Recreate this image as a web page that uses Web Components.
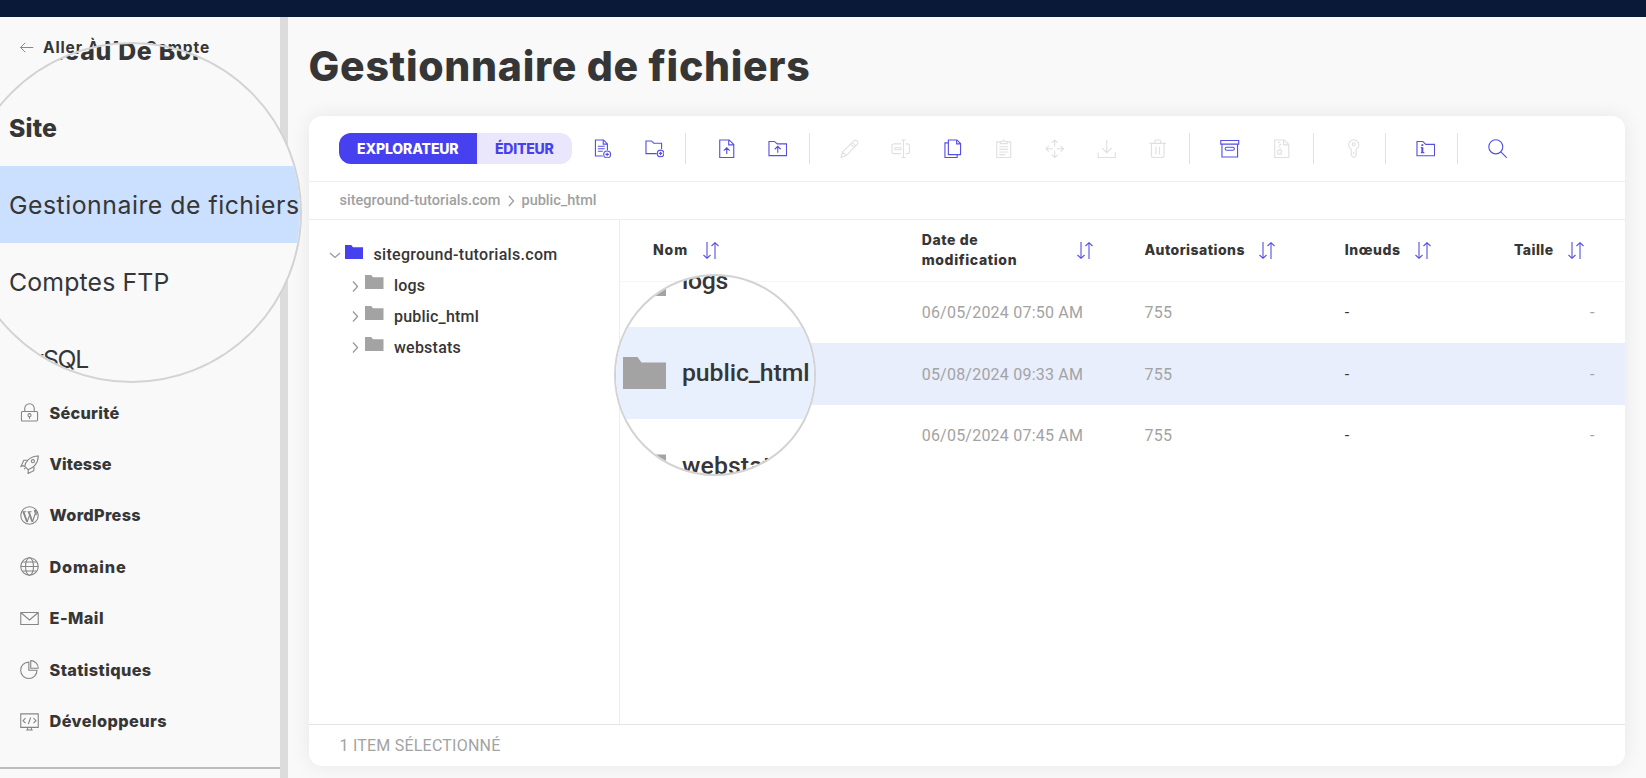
<!DOCTYPE html>
<html lang="fr">
<head>
<meta charset="utf-8">
<title>Gestionnaire de fichiers</title>
<style>
  html, body {
    margin: 0;
    height: 100%;
    overflow: hidden;
    background: #f9f9f9;
    color: #363636;
    font-family: Roboto, sans-serif;
  }
</style>
</head>
<body>
<file-manager-app></file-manager-app>

<script>
const HEAD_FONT = "Inter, 'Open Sans', sans-serif";

// All icons share a 20x20 box
const ICONS = {
  back: '<path d="M18 10H3M8.500 4.500 3 10l5.500 5.500"/>',
  lock: '<rect x="1.500" y="9" width="17" height="10" rx="1"/><path d="M5 9V5.800a5 5 0 0 1 10 0V9"/><circle cx="10" cy="12.800" r="1.600"/><path d="M10 14.400v2.400"/>',
  rocket: '<path d="M5 12C5.500 7 10 1.500 19.300 1 19 9 14 14 8.500 15.500z"/><circle cx="13.600" cy="6.500" r="1.600"/><path d="M8 5.500H4L1 12l2.500-.8 1.500 1M14.800 12.500l-.3 4-6 3 .3-4M4.500 15l1-1.500"/>',
  wordpress: '<circle cx="10" cy="10" r="9.200"/><path stroke-width="1.900" d="m3.600 6.200 3.900 10.600M9.200 6.200l3.900 10.600"/><path d="m7.500 16.800 3-8.300M13.100 16.800l2.900-8.600c.5-1.600-1.200-2.600-.8-4.200M2.300 6h4.200M8 6h4.200"/><path stroke-width="1.600" d="M16.200 4.200c1.300 2 1.200 3.600.5 5.600"/>',
  globe: '<circle cx="10" cy="10" r="9.200"/><ellipse cx="10" cy="10" rx="4.200" ry="9.200"/><path d="M.8 10h18.400M2.300 5.300h15.400M2.300 14.700h15.400"/>',
  mail: '<path d="M.8 3.700h18.400v12.600H.8zM.8 3.700 10 11.500l9.200-7.800"/>',
  stats: '<path d="M9.300 2.200a8.600 8.600 0 1 0 8.600 8.600H9.300z"/><path d="M11.300.7v8h7.900A7.900 7.900 0 0 0 11.300.7z"/>',
  dev: '<path d="M.8 2h18.400v14.200H.8zM6.500 19h7M8 16.200V19m4-2.800V19M5.800 6.500 3.200 9.200l2.600 2.600M14.200 6.500l2.600 2.700-2.600 2.600M11.200 5.800 8.800 12.600"/>',
  newFile: '<path d="M10 17.500H2.500V1h8.300l4 4v6.500M10.500 1v4.300h4.300M5 7.500h7M5 10h7M5 12.500h5"/><circle cx="14.500" cy="15.800" r="3.500"/><path d="M14.500 14v3.600M12.700 15.800h3.600"/>',
  newFolder: '<path d="M12 15H1V2h5.500L9 4.300h8v6"/><circle cx="16" cy="14.800" r="3.400"/><path d="M16 13v3.600M14.200 14.800h3.600"/>',
  upFile: '<path d="M2.800 1h9.700l4.700 4.700V19H2.800zM12 1v5h5M10 15.500V9M7 12l3-3 3 3"/>',
  upFolder: '<path d="M1 2.500h5.500L9.500 5H19v12H1zM10 14V7.500M7 10.500l3-3 3 3"/>',
  pencil: '<path d="m1 19 1.500-5.500L14.500 1.700q1.500-1.200 3 .3t.5 3L6.500 17zM12.500 3.500l4 4M10.800 5.200l4 4M2.500 13.500 6.500 17"/>',
  rename: '<path d="M10.500 5H3a2 2 0 0 0-2 2v6a2 2 0 0 0 2 2h7.500M15 5h2a2 2 0 0 1 2 2v6a2 2 0 0 1-2 2h-2M12.800 1v18M10.500 1h4.600M10.500 19h4.600M4 9h6v2H4z"/>',
  copy: '<path d="M5.500 1h8.800l3.700 3.700V16H5.500zM14 1v4h4M5.500 4H2v15h12.500v-3"/>',
  paste: '<path d="M6.500 3H2.800v16h14.400V3h-3.700M6.500 4.800V2.500h2L10 1l1.500 1.500h2v2.300zM5.500 8h9M5.500 10.700h9M5.500 13.300h9M5.500 16h6"/>',
  move: '<path d="M10 1v7M10 12v7M1 10h7M12 10h7M7 4l3-3 3 3M7 16l3 3 3-3M4 7l-3 3 3 3M16 7l3 3-3 3"/>',
  download: '<path d="M1.200 13.500V19h17.600v-5.500M10 1v13M5 9l5 5 5-5"/>',
  trash: '<path d="M1.500 4.500h17M3.500 4.500V17q0 2 2 2h9q2 0 2-2V4.500M6.500 4.500 7.500 1h5l1 3.500M8.200 8v8M11.800 8v8"/>',
  archive: '<path d="M.8 1.500h18.400v3.700H.8zM2 5.200V18.500h16V5.200"/><rect x="5.300" y="8.500" width="9.400" height="3" rx="1.500"/>',
  extract: '<path d="M2.800 1h9.700l4.700 4.700V19H2.800zM12 1v5h5M6 3.500h2M7.500 5.500h2M6 7.500h2M7.500 9.500h2"/><rect x="6" y="11.500" width="3.500" height="4"/>',
  key: '<path d="M7.500 10.500a5.200 5.200 0 1 1 5 0v6.500L10 19.200 7.500 17z"/><circle cx="10" cy="5.300" r="1.500"/><path d="M10 13v3"/>',
  folderInfo: '<path d="M1 2.500h6L10 5.500h9v11.700H1z"/><path stroke-width="2" d="M6.500 5.500v1.800M6.500 8.500v5.500"/><path d="M5 8.800h1.500M5 14h3.500"/>',
  search: '<circle cx="8" cy="8" r="7.200"/><path d="m13.200 13.200 6 6"/>'
};

const line = (name, size) => `<svg width="${size}" height="${size}" viewBox="0 0 20 20" fill="none" stroke="currentColor" stroke-width="1.150">${ICONS[name]}</svg>`;

class BaseElement extends HTMLElement {
  connectedCallback() {
    if (this.shadowRoot) return;
    this.attachShadow({ mode: 'open' });
    this.shadowRoot.innerHTML = this.render();
  }
}

class UiIcon extends BaseElement {
  render() {
    return `
      <style>
        :host { display: inline-flex; flex: none; }
        svg { display: block; }
      </style>
      ${line(this.getAttribute('name'), this.getAttribute('size') || 20)}`;
  }
}

class FolderIcon extends BaseElement {
  render() {
    const w = this.getAttribute('width') || 18.5;
    return `
      <style>
        :host { display: inline-flex; flex: none; color: #a3a3a3; }
      </style>
      <svg width="${w}" height="${w * 0.755}" viewBox="0 0 43 32.500" preserveAspectRatio="none">
        <path fill="currentColor" d="M0 0h14.500l4 5.500H43v27H0z"/>
      </svg>`;
  }
}

class NavItem extends BaseElement {
  render() {
    return `
      <style>
        :host {
          display: flex;
          align-items: center;
          gap: 10.500px;
          height: 51.400px;
          padding-left: 20px;
          font: 800 16.300px ${HEAD_FONT};
        }
        ui-icon { color: #858585; }
      </style>
      <ui-icon name="${this.getAttribute('icon')}" size="19"></ui-icon>
      <slot></slot>`;
  }
}

class SideBar extends BaseElement {
  render() {
    return `
      <style>
        :host {
          display: flex;
          flex-direction: column;
          box-sizing: border-box;
          width: 288px;
          border-right: 8px solid #dcdcdc;
        }
        .back {
          display: flex;
          align-items: center;
          gap: 8px;
          height: 61px;
          padding-left: 18px;
          font: 700 15.500px ${HEAD_FONT};
        }
        .back ui-icon { color: #858585; }
        nav { margin-top: 309px; }
        hr {
          width: 100%;
          margin: auto 0 9px;
          border: 0;
          border-top: 2px solid #bdbdbd;
        }
      </style>
      <div class="back"><ui-icon name="back" size="17"></ui-icon><fit-text w="167">Aller À Mon Compte</fit-text></div>
      <nav>
        <nav-item icon="lock"><fit-text w="70">Sécurité</fit-text></nav-item>
        <nav-item icon="rocket"><fit-text w="62">Vitesse</fit-text></nav-item>
        <nav-item icon="wordpress"><fit-text w="91.500">WordPress</fit-text></nav-item>
        <nav-item icon="globe"><fit-text w="77">Domaine</fit-text></nav-item>
        <nav-item icon="mail"><fit-text w="54.500">E-Mail</fit-text></nav-item>
        <nav-item icon="stats"><fit-text w="102">Statistiques</fit-text></nav-item>
        <nav-item icon="dev"><fit-text w="117.500">Développeurs</fit-text></nav-item>
      </nav>
      <hr>`;
  }
}

class ToolBar extends BaseElement {
  render() {
    const groups = [
      ['newFile', 'newFolder'],
      ['upFile', 'upFolder'],
      ['-pencil', '-rename', 'copy', '-paste', '-move', '-download', '-trash'],
      ['archive', '-extract'],
      ['-key'],
      ['folderInfo'],
      ['search']
    ];
    const html = groups.map(g => g.map(n => n[0] === '-'
      ? `<button class="off"><ui-icon name="${n.slice(1)}" size="19.500"></ui-icon></button>`
      : `<button><ui-icon name="${n}" size="19.500"></ui-icon></button>`).join('')).join('<i></i>');
    return `
      <style>
        :host {
          display: flex;
          align-items: center;
          box-sizing: border-box;
          height: 66px;
          padding-left: 30.500px;
          border-bottom: 1.500px solid #ededed;
        }
        .tabs {
          display: flex;
          height: 31px;
          margin-right: 5.200px;
          border-radius: 12px;
          overflow: hidden;
          font: 800 14px ${HEAD_FONT};
        }
        .tabs div {
          display: flex;
          align-items: center;
          justify-content: center;
          width: 95.500px;
          background: #eae6fb;
          color: #4640ee;
        }
        .tabs .on { width: 137.500px; background: #4640ee; color: #fff; }
        button {
          display: flex;
          align-items: center;
          justify-content: center;
          width: 51.400px;
          padding: 1px 0 0;
          border: 0;
          background: none;
          color: #554fe6;
        }
        .off { color: #e0e0e0; }
        i { width: 1px; height: 31px; margin: 0 14.100px 0 5.500px; background: #e0e0e0; }
      </style>
      <div class="tabs">
        <div class="on"><fit-text w="101.500">EXPLORATEUR</fit-text></div>
        <div><fit-text w="58.500">ÉDITEUR</fit-text></div>
      </div>
      ${html}`;
  }
}

class BreadCrumb extends BaseElement {
  render() {
    return `
      <style>
        :host {
          display: flex;
          align-items: center;
          box-sizing: border-box;
          height: 38px;
          padding-left: 31px;
          border-bottom: 1.500px solid #ededed;
          font: 500 14.500px Roboto, sans-serif;
          color: #a0a0a0;
        }
        svg { margin: 1px 7px 0 7px; }
      </style>
      <fit-text w="161">siteground-tutorials.com</fit-text>
      <svg width="7" height="12" viewBox="0 0 7 12" fill="none" stroke="currentColor" stroke-width="1.400"><path d="m1 1 4.500 5L1 11"/></svg>
      <fit-text w="75">public_html</fit-text>`;
  }
}

class TreeItem extends BaseElement {
  render() {
    const open = this.hasAttribute('open');
    return `
      <style>
        :host {
          display: flex;
          align-items: center;
          height: 30.800px;
          padding-left: ${open ? 20 : 43}px;
          font: 500 16px Roboto, sans-serif;
        }
        .arrow { flex: none; width: ${open ? 12 : 7}px; margin-right: ${open ? 4 : 6.500}px; color: #999; }
        folder-icon { margin: 0 10.500px 6.500px 0; ${open ? 'color: #4640ee;' : ''} }
      </style>
      <svg class="arrow" height="12" viewBox="0 0 ${open ? 12 : 7} 12" fill="none" stroke="currentColor" stroke-width="1.300">
        <path d="${open ? 'm1 4 5 4.500L11 4' : 'm1 1.500 4.500 5L1 11.500'}"/>
      </svg>
      <folder-icon></folder-icon>
      <slot></slot>`;
  }
}

class HeadCell extends BaseElement {
  render() {
    return `
      <style>
        :host { display: flex; align-items: center; gap: 14.500px; font: 800 14px/20.500px ${HEAD_FONT}; }
        svg { flex: none; color: #554fe6; }
      </style>
      <slot></slot>
      <svg width="16" height="17" viewBox="0 0 16 17" fill="none" stroke="currentColor" stroke-width="1.100">
        <path d="M4 0v16M.500 13 4 16.300 7.500 13M12 17V1M8.500 4 12 .700 15.500 4"/>
      </svg>`;
  }
}

class FileTable extends BaseElement {
  render() {
    const rows = [
      ['logs', '06/05/2024 07:50 AM'],
      ['public_html', '05/08/2024 09:33 AM'],
      ['webstats', '06/05/2024 07:45 AM']
    ];
    return `
      <style>
        :host { display: block; flex: 1; font-size: 16px; color: #a3a3a3; }
        .row {
          display: grid;
          grid-template-columns: 268.700px 222.700px 200.300px 1fr auto;
          align-items: center;
          justify-items: start;
          height: 61.700px;
          padding: 0 30.500px 0 33px;
        }
        .head { height: 62px; box-sizing: border-box; border-bottom: 1px solid #f6f6f6; color: #363636; }
        .head head-cell:nth-child(2) { width: 171.500px; justify-content: space-between; }
        .head head-cell:last-child { margin-right: 10.500px; }
        .row.selected { background: #e8eefc; }
        .nodes { color: #363636; }
      </style>
      <div class="row head">
        <head-cell><fit-text w="35">Nom</fit-text></head-cell>
        <head-cell><span><fit-text w="56.500">Date de</fit-text><br><fit-text w="95.500">modification</fit-text></span></head-cell>
        <head-cell><fit-text w="100.500">Autorisations</fit-text></head-cell>
        <head-cell><fit-text w="56">Inœuds</fit-text></head-cell>
        <head-cell><fit-text w="39.500">Taille</fit-text></head-cell>
      </div>
      ${rows.map(([name, date]) => `
      <div class="row ${name === 'public_html' ? 'selected' : ''}">
        <span></span>
        <fit-text w="161.500">${date}</fit-text>
        <fit-text w="28">755</fit-text>
        <span class="nodes">-</span>
        <span>-</span>
      </div>`).join('')}`;
  }
}

// Round magnifier laid over the page, its rows go in the slot
class ZoomLens extends BaseElement {
  render() {
    const size = this.getAttribute('size');
    return `
      <style>
        :host {
          position: absolute;
          box-sizing: border-box;
          width: ${size}px;
          height: ${size}px;
          border: 2px solid #d3d3d3;
          border-radius: 50%;
          overflow: hidden;
        }
      </style>
      <slot></slot>`;
  }
}

class FileManagerApp extends BaseElement {
  render() {
    return `
      <style>
        :host { display: flex; flex-direction: column; position: relative; height: 100vh; overflow: hidden; }
        header { flex: none; height: 17px; background: #0b1938; }
        .page { display: flex; flex: 1; min-height: 0; }
        main { display: flex; flex: 1; flex-direction: column; padding: 0 21px 12.500px 20.500px; }
        h1 { display: flex; align-items: center; height: 98.500px; margin: 0; font: 800 41px ${HEAD_FONT}; }
        .card {
          display: flex;
          flex: 1;
          flex-direction: column;
          border-radius: 13px;
          background: #fff;
          box-shadow: 0 0 20px rgba(0, 0, 0, .08);
        }
        .content { display: flex; flex: 1; }
        .tree { box-sizing: border-box; width: 311.500px; padding-top: 20px; border-right: 1.500px solid #ededed; }
        footer {
          display: flex;
          align-items: center;
          box-sizing: border-box;
          height: 42px;
          padding-left: 31px;
          border-top: 1px solid #e4e4e4;
          font-size: 16px;
          color: #a3a3a3;
        }
        .side { left: -39px; top: 42px; background: #f9f9f9; font: 400 24.800px ${HEAD_FONT}; }
        .side div { display: flex; align-items: center; height: 77px; padding-left: 46px; white-space: nowrap; }
        .side div:first-child { margin-top: -32px; }
        .side b { font-weight: 800; }
        .side .on { background: #cbdffe; }
        .files { left: 614px; top: 274px; background: #fff; font: 500 24.800px Roboto, sans-serif; }
        .files div { display: flex; align-items: center; gap: 16px; height: 92.500px; padding-left: 7px; white-space: nowrap; }
        .files div:first-child { margin-top: -42px; }
        .files .on { background: #e8effd; }
      </style>
      <header></header>
      <div class="page">
        <side-bar></side-bar>
        <main>
          <h1><fit-text w="502">Gestionnaire de fichiers</fit-text></h1>
          <section class="card">
            <tool-bar></tool-bar>
            <bread-crumb></bread-crumb>
            <div class="content">
              <div class="tree">
                <tree-item open><fit-text w="184">siteground-tutorials.com</fit-text></tree-item>
                <tree-item><fit-text w="31">logs</fit-text></tree-item>
                <tree-item><fit-text w="85">public_html</fit-text></tree-item>
                <tree-item><fit-text w="67">webstats</fit-text></tree-item>
              </div>
              <file-table></file-table>
            </div>
            <footer><fit-text w="161">1 ITEM SÉLECTIONNÉ</fit-text></footer>
          </section>
        </main>
      </div>
      <zoom-lens class="side" size="341">
        <div><b><fit-text w="210">Tableau De Bord</fit-text></b></div>
        <div><b><fit-text w="48">Site</fit-text></b></div>
        <div class="on"><fit-text w="290.500">Gestionnaire de fichiers</fit-text></div>
        <div><fit-text w="160.500">Comptes FTP</fit-text></div>
        <div><fit-text w="79">MySQL</fit-text></div>
      </zoom-lens>
      <zoom-lens class="files" size="202">
        <div><folder-icon width="43"></folder-icon><fit-text w="46">logs</fit-text></div>
        <div class="on"><folder-icon width="43"></folder-icon><fit-text w="127.500">public_html</fit-text></div>
        <div><folder-icon width="43"></folder-icon><fit-text w="102">webstats</fit-text></div>
      </zoom-lens>`;
  }
}

// Tracks its text out (or in) until it is w pixels wide
class FitText extends HTMLElement {
  connectedCallback() {
    if (this.shadowRoot) return;
    this.attachShadow({ mode: 'open' });
    this.shadowRoot.innerHTML = `
      <style>
        :host { display: inline-block; white-space: nowrap; }
      </style>
      <slot></slot>`;
    const diff = Number(this.getAttribute('w')) - this.getBoundingClientRect().width;
    this.style.letterSpacing = `${diff / this.textContent.length}px`;
  }
}

customElements.define('file-manager-app', FileManagerApp);
customElements.define('side-bar', SideBar);
customElements.define('nav-item', NavItem);
customElements.define('tool-bar', ToolBar);
customElements.define('bread-crumb', BreadCrumb);
customElements.define('tree-item', TreeItem);
customElements.define('file-table', FileTable);
customElements.define('head-cell', HeadCell);
customElements.define('zoom-lens', ZoomLens);
customElements.define('folder-icon', FolderIcon);
customElements.define('ui-icon', UiIcon);
// last, it measures text once everything above is rendered
customElements.define('fit-text', FitText);
</script>
</body>
</html>
